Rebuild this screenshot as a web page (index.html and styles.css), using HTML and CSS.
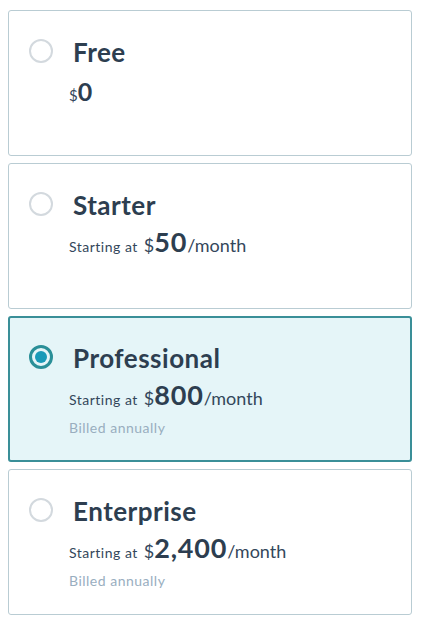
FILE: index.html
```html
<!DOCTYPE html>
<html lang="en">
<head>
	<meta charset="UTF-8">
	<title>Plans</title>
	<meta name="viewport" content="width=device-width, initial-scale=1.0">
	<link rel="stylesheet" href="styles.css">
</head>
<body>
	<div class="plans">
		<label class="plan">
			<span class="radio"></span>
			<div class="plan_info">
				<div class="plan_name">Free</div>
				<div class="plan_price plan_price_free"><span class="cur cur_small">$</span><span class="num num_small">0</span></div>
			</div>
		</label>
		<label class="plan">
			<span class="radio"></span>
			<div class="plan_info">
				<div class="plan_name">Starter</div>
				<div class="plan_price"><span class="from">Starting at</span><span class="cur">$</span><span class="num">50</span><span class="per">/month</span></div>
			</div>
		</label>
		<label class="plan plan_active">
			<span class="radio"></span>
			<div class="plan_info">
				<div class="plan_name">Professional</div>
				<div class="plan_price"><span class="from">Starting at</span><span class="cur">$</span><span class="num">800</span><span class="per">/month</span></div>
				<div class="plan_note">Billed annually</div>
			</div>
		</label>
		<label class="plan">
			<span class="radio"></span>
			<div class="plan_info">
				<div class="plan_name">Enterprise</div>
				<div class="plan_price"><span class="from">Starting at</span><span class="cur">$</span><span class="num">2,400</span><span class="per">/month</span></div>
				<div class="plan_note">Billed annually</div>
			</div>
		</label>
	</div>
</body>
</html>
```

FILE: styles.css
```css
*{
	margin: 0;
	padding: 0;
	box-sizing: border-box;
}
body {
	background-color: #fff;
	font-family: Lato, "Open Sans", sans-serif;
	color: #2d3e50;
}
.plans {
	width: 404px;
	margin: 10px 0 0 8px;
	display: flex;
	flex-direction: column;
	gap: 7px;
}
.plan {
	display: flex;
	height: 146px;
	padding: 27px 0 0 20px;
	border: 1px solid #b9ccd3;
	border-radius: 3px;
	background-color: #fff;
}
.plan_active {
	border: 2px solid #3a8f98;
	padding: 26px 0 0 19px;
	background-color: #e5f5f8;
}
.radio {
	flex: none;
	width: 24px;
	height: 24px;
	margin-top: 1px;
	border: 2px solid #d3d9de;
	border-radius: 50%;
	position: relative;
}
.plan_active .radio {
	border: 3px solid #2a8f98;
	background-color: #e5f5f8;
}
.plan_active .radio:after {
	content: "";
	position: absolute;
	top: 3px;
	left: 3px;
	width: 12px;
	height: 12px;
	border-radius: 50%;
	background-color: #1a9ab8;
}
.plan_info {
	margin-left: 16px;
}
.plan_name {
	margin-left: 4px;
	font-size: 26px;
	font-weight: 700;
	letter-spacing: 0.5px;
	line-height: 28px;
	color: #2d3e50;
}
.plan_price {
	margin-top: 9px;
	line-height: 28px;
	color: #33475b;
}
.plan_price_free {
	margin-top: 11px;
}
.from {
	font-size: 14px;
	letter-spacing: 0.5px;
	margin-right: 6px;
}
.cur {
	font-size: 18px;
}
.cur_small {
	font-size: 15px;
}
.num {
	font-size: 27px;
	font-weight: 700;
	letter-spacing: 0.8px;
	color: #2d3e50;
}
.num_small {
	font-size: 25px;
}
.per {
	font-size: 18px;
}
.plan_note {
	margin-top: 5px;
	font-size: 14px;
	letter-spacing: 0.5px;
	color: #99aebf;
}
```
